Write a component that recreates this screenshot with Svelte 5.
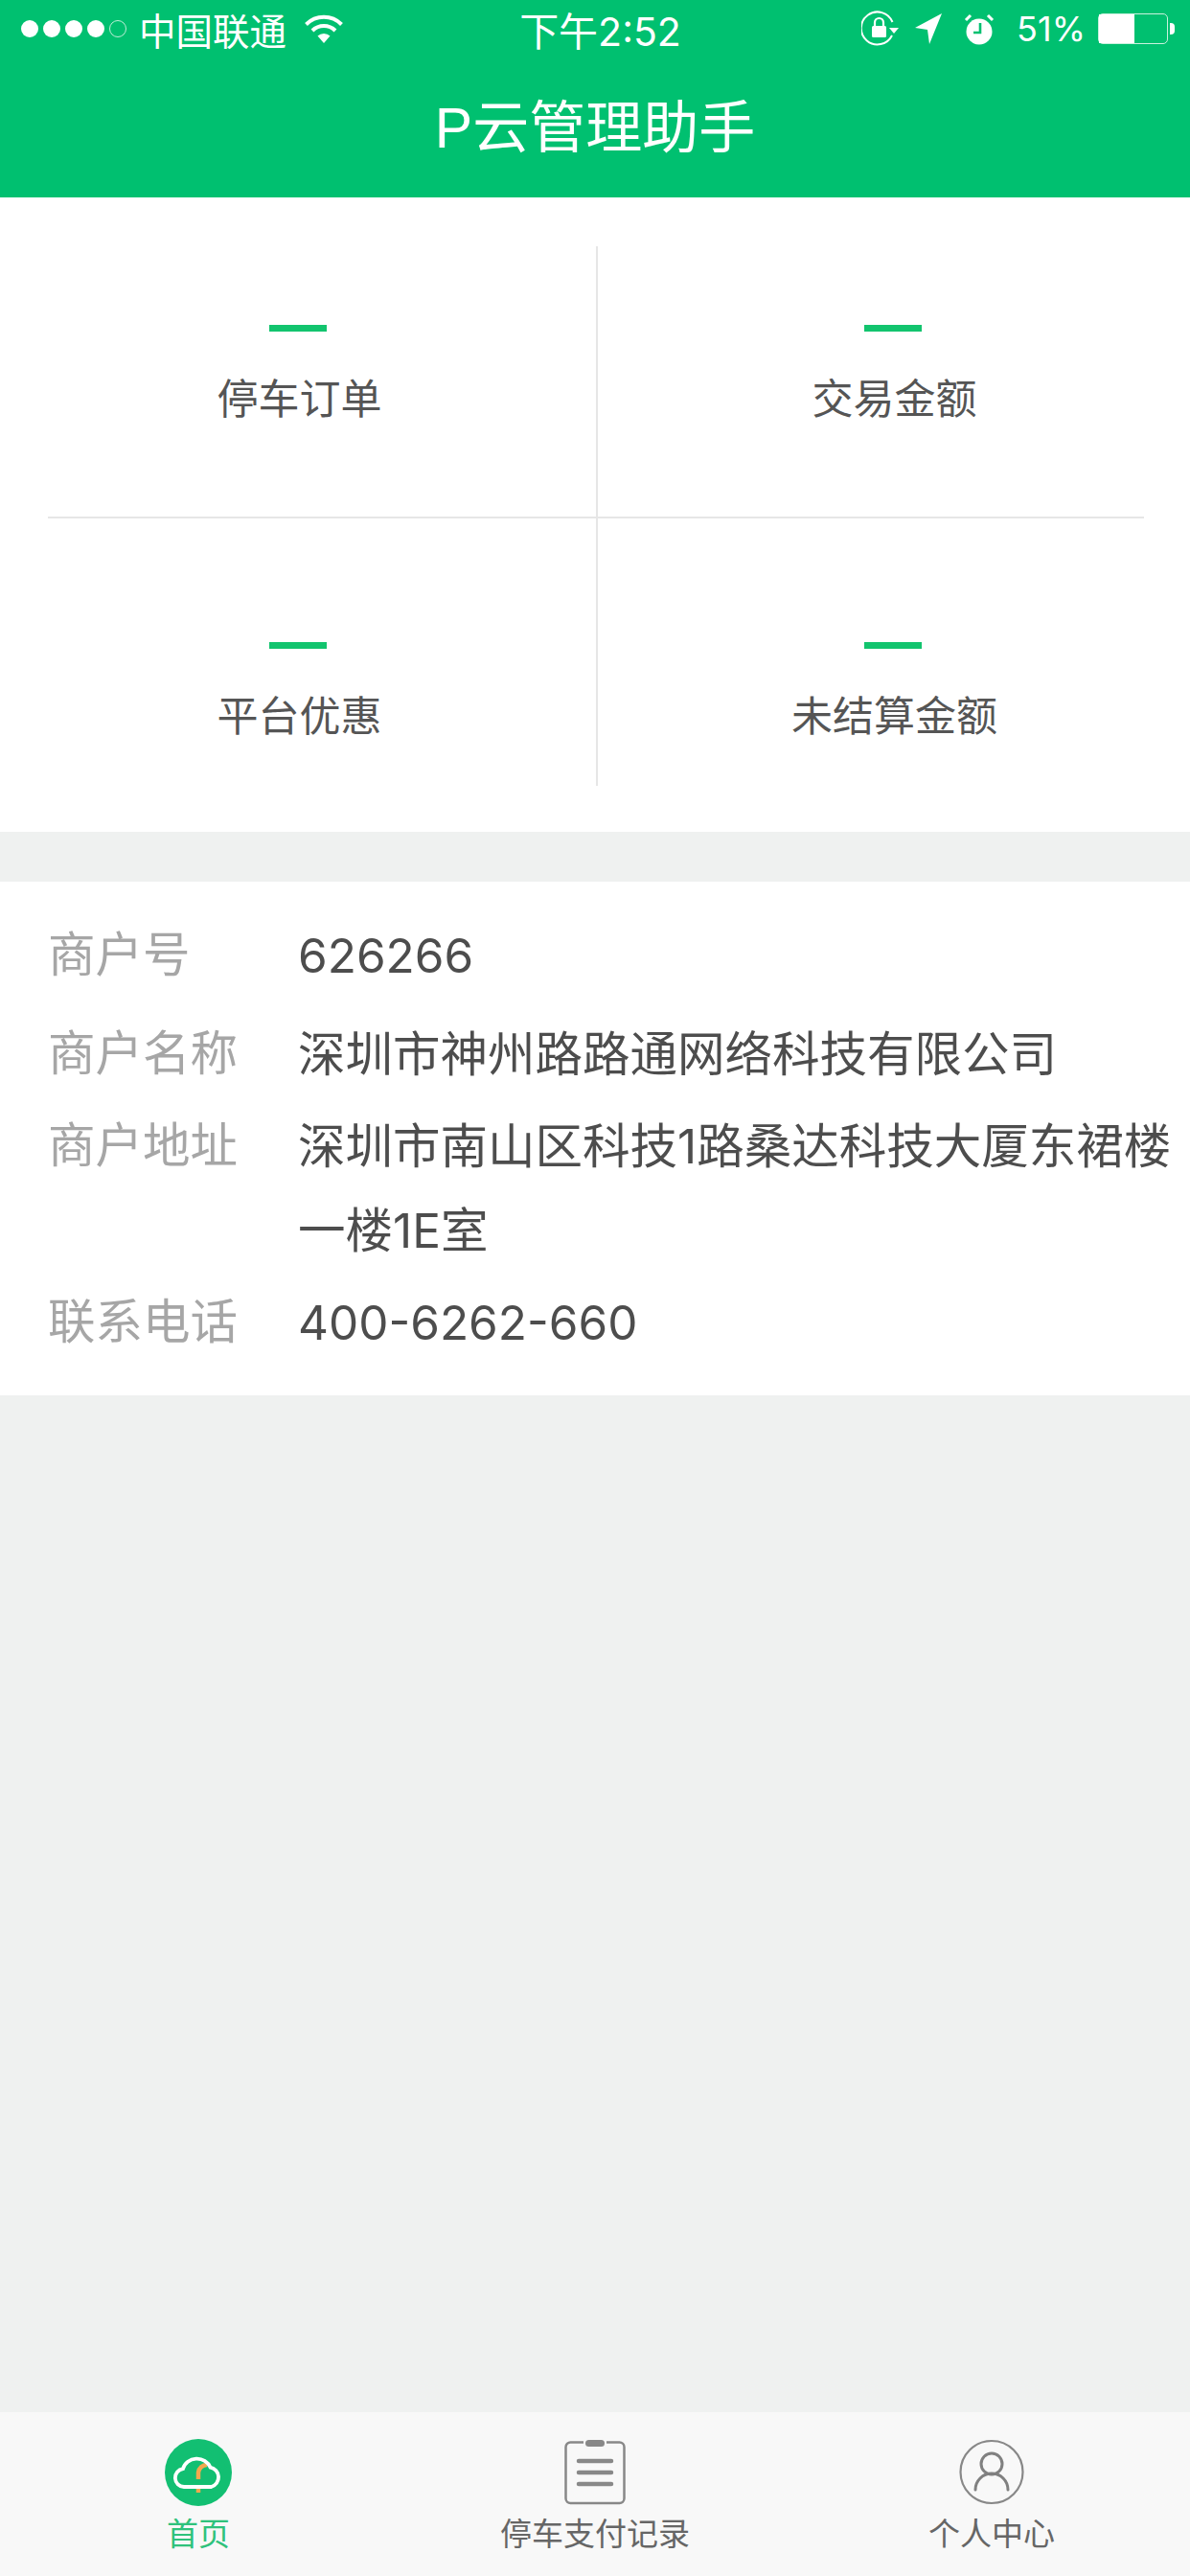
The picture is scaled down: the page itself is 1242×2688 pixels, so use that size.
<script>
  const stats = ['停车订单', '交易金额', '平台优惠', '未结算金额'];
  const info = [
    { label: '商户号', value: '626266' },
    { label: '商户名称', value: '深圳市神州路路通网络科技有限公司' },
    { label: '商户地址', value: '深圳市南山区科技1路桑达科技大厦东裙楼一楼1E室' },
    { label: '联系电话', value: '400-6262-660' }
  ];
</script>

<div class="page">
  <header class="top">
    <div class="status">
      <div class="status-left">
        <span class="signal">
          <i></i><i></i><i></i><i></i><i class="off"></i>
        </span>
        <span class="carrier">中国联通</span>
        <svg class="wifi" width="40" height="30" viewBox="0 0 40 30">
          <path d="M1.500 10.500a26 26 0 0 1 37 0" fill="none" stroke="#fff" stroke-width="4" />
          <path d="M8 17a17 17 0 0 1 24 0" fill="none" stroke="#fff" stroke-width="4" />
          <path d="M13.500 22.500a9.500 9.500 0 0 1 13 0L20 30z" fill="#fff" />
        </svg>
      </div>
      <div class="clock">下午2:52</div>
      <div class="status-right">
        <svg width="40" height="38" viewBox="0 0 40 38">
          <path d="M32 26a17 17 0 1 1 .5-14" fill="none" stroke="#fff" stroke-width="2" />
          <path d="M29 18h10l-5 6z" fill="#fff" />
          <rect x="11" y="16" width="15" height="12" rx="1.500" fill="#fff" />
          <path d="M14 16v-3.500a4.500 4.500 0 0 1 9 0V16" fill="none" stroke="#fff" stroke-width="2.200" />
        </svg>
        <svg class="loc" width="28" height="32" viewBox="0 0 28 32">
          <path d="M28 0 15 32l-2-15L0 15z" fill="#fff" />
        </svg>
        <svg class="alarm" width="32" height="34" viewBox="0 0 32 34">
          <circle cx="16" cy="20" r="13.500" fill="#fff" />
          <path d="M17 11v10h-7" fill="none" stroke="#00c070" stroke-width="2.600" />
          <path d="M2 8l5-5M30 8l-5-5" stroke="#fff" stroke-width="3" />
        </svg>
        <span class="pct">51%</span>
        <div class="battery"><div class="level"></div></div>
        <div class="nub"></div>
      </div>
    </div>
    <h1>P云管理助手</h1>
  </header>

  <section class="stats">
    {#each stats as name}
      <div class="cell">
        <div class="dash"></div>
        <div class="name">{name}</div>
      </div>
    {/each}
  </section>

  <section class="info">
    {#each info as row}
      <div class="row">
        <div class="label">{row.label}</div>
        <div class="value">{row.value}</div>
      </div>
    {/each}
  </section>

  <div class="spacer"></div>

  <nav class="tabs">
    <div class="tab active">
      <svg width="70" height="70" viewBox="0 0 70 70">
        <circle cx="35" cy="35" r="35" fill="#12bf72" />
        <path d="M35 42V35a9 9 0 0 1 9-8" fill="none" stroke="#f3a84e" stroke-width="4.500" />
        <path d="M35 56v-6" stroke="#f3a84e" stroke-width="4.500" />
        <path d="M20 50a9.500 9.500 0 0 1-1-18.900 15 14 0 0 1 28.500-1.500A10.500 10.500 0 0 1 48.500 50z" fill="none" stroke="#fff" stroke-width="3.800" />
      </svg>
      <span>首页</span>
    </div>
    <div class="tab">
      <svg width="64" height="70" viewBox="0 0 64 70">
        <path d="M20 3.500H6.500a5 5 0 0 0-5 5V62a5 5 0 0 0 5 5h51a5 5 0 0 0 5-5V8.500a5 5 0 0 0-5-5H44" fill="none" stroke="#888" stroke-width="2.500" />
        <rect x="22" y="1" width="20" height="7" rx="3.500" fill="#888" />
        <path d="M15 23h34M15 35h34M15 47h34" stroke="#888" stroke-width="4.500" stroke-linecap="round" />
      </svg>
      <span>停车支付记录</span>
    </div>
    <div class="tab">
      <svg width="70" height="70" viewBox="0 0 70 70">
        <circle cx="35" cy="34.500" r="32.500" fill="none" stroke="#888" stroke-width="2.200" />
        <circle cx="35" cy="26" r="11" fill="none" stroke="#808080" stroke-width="3" />
        <path d="M18 53a17 17 0 0 1 34 0" fill="none" stroke="#808080" stroke-width="3" stroke-linecap="round" />
      </svg>
      <span>个人中心</span>
    </div>
  </nav>
</div>

<style>
  :global(body) {
    margin: 0;
    font-family: "Liberation Sans", "Noto Sans CJK SC", sans-serif;
  }

  .page {
    width: 1242px;
    height: 2688px;
    display: flex;
    flex-direction: column;
    background: #eff1f0;
  }

  .top {
    height: 206px;
    background: #00c070;
    color: #fff;
    flex-shrink: 0;
  }

  .status {
    height: 60px;
    padding: 0 16px 0 22px;
    display: grid;
    grid-template-columns: 1fr auto 1fr;
    align-items: center;
    font-family: Inter, "Noto Sans CJK SC", sans-serif;
  }

  .status-left {
    display: flex;
    align-items: center;
  }

  .signal {
    display: flex;
    gap: 5px;
    margin-right: 13px;
  }

  .signal i {
    width: 18px;
    height: 18px;
    border-radius: 50%;
    background: #fff;
    display: block;
  }

  .signal i.off {
    box-sizing: border-box;
    background: none;
    border: 1.500px solid #bfeed8;
  }

  .carrier {
    font-size: 38.500px;
  }

  .wifi {
    margin-left: 19px;
  }

  .clock {
    font-size: 41px;
    margin-left: 5px;
  }

  .status-right {
    display: flex;
    align-items: center;
    justify-content: flex-end;
  }

  .loc {
    margin-left: 16px;
  }

  .alarm {
    margin-left: 23px;
  }

  .pct {
    margin-left: 23px;
    font-size: 36px;
  }

  .battery {
    margin-left: 13px;
    width: 73px;
    height: 32px;
    box-sizing: border-box;
    border: 1.500px solid #c9f1de;
    border-radius: 5px;
    display: flex;
  }

  .level {
    width: 37px;
    background: #fff;
  }

  .nub {
    width: 5px;
    height: 12px;
    background: #fff;
    border-radius: 0 4px 4px 0;
    margin-left: 2px;
  }

  h1 {
    margin: 0;
    line-height: 148px;
    text-align: center;
    font-size: 59px;
    font-weight: 400;
  }

  .stats {
    position: relative;
    height: 662px;
    background: #fff;
    display: grid;
    grid-template-columns: 1fr 1fr;
    grid-template-rows: 1fr 1fr;
    flex-shrink: 0;
  }

  /* divider lines stop short of the section edges */
  .stats::before {
    content: "";
    position: absolute;
    left: 622px;
    top: 51px;
    bottom: 48px;
    width: 2px;
    background: #e6e6e6;
  }

  .stats::after {
    content: "";
    position: absolute;
    left: 50px;
    right: 48px;
    top: 333px;
    height: 2px;
    background: #e6e6e6;
  }

  .cell {
    display: flex;
    flex-direction: column;
    align-items: center;
    padding-top: 133px;
    box-sizing: border-box;
  }

  .dash {
    width: 60px;
    height: 7px;
    background: #12c46e;
  }

  .name {
    margin: 43px 0 0 4px;
    font-size: 43px;
    line-height: 56px;
    color: #555;
  }

  .info {
    margin-top: 52px;
    padding: 33px 0 32px 50px;
    background: #fff;
    flex-shrink: 0;
    display: flex;
    flex-direction: column;
    gap: 8px;
  }

  .row {
    display: flex;
    font-size: 49.500px;
    line-height: 88px;
  }

  .row:first-child {
    margin-bottom: 7px;
  }

  .label {
    width: 261px;
    flex-shrink: 0;
    color: #a6a6a6;
  }

  .value {
    color: #4d4d4d;
    font-family: Inter, "Noto Sans CJK SC", sans-serif;
  }

  .spacer {
    flex: 1;
  }

  .tabs {
    height: 171px;
    background: #f8f8f8;
    display: grid;
    grid-template-columns: 1fr 1fr 1fr;
    flex-shrink: 0;
  }

  .tab {
    display: flex;
    flex-direction: column;
    align-items: center;
    padding-top: 28px;
    font-size: 33px;
    line-height: 40px;
    color: #666;
  }

  .tab svg {
    display: block;
  }

  .tab span {
    margin-top: 10px;
  }

  .tab.active {
    color: #2fc27c;
  }
</style>
